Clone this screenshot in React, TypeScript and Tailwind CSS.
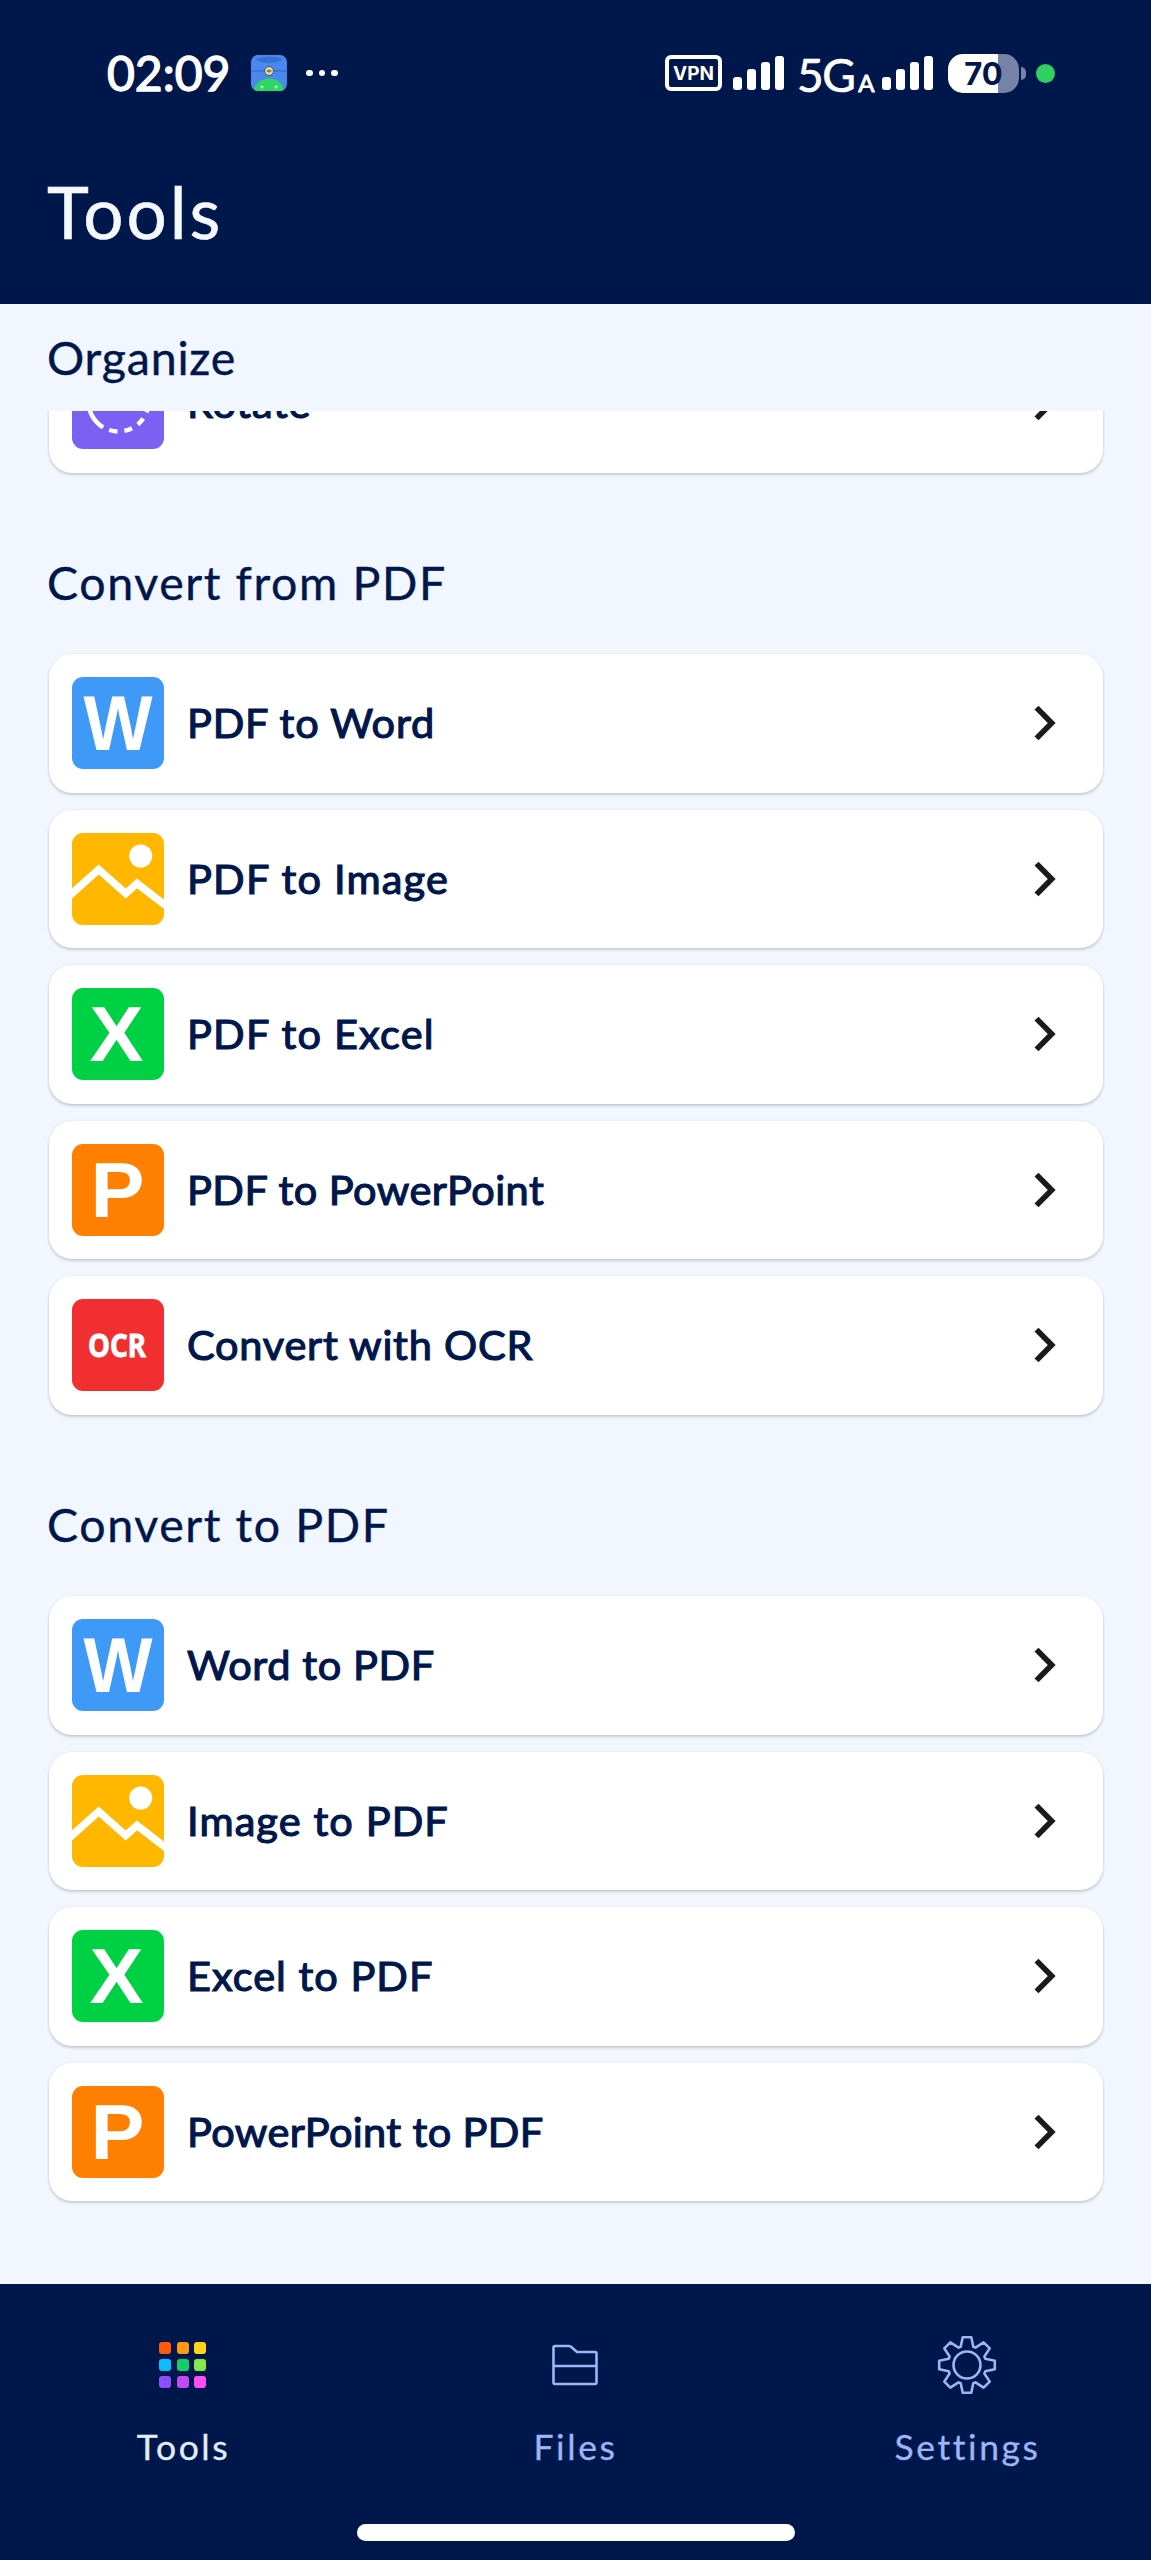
import type { ReactNode } from "react";

// ── Types ──────────────────────────────────────────────────────────
type IconKind = "word" | "image" | "excel" | "powerpoint" | "ocr" | "rotate";

type Tool = {
  label: string;
  icon: IconKind;
  tracking?: string;
};

const CONVERT_FROM: Tool[] = [
  { label: "PDF to Word", icon: "word" },
  { label: "PDF to Image", icon: "image", tracking: "tracking-[1.2px]" },
  { label: "PDF to Excel", icon: "excel", tracking: "tracking-[1.2px]" },
  { label: "PDF to PowerPoint", icon: "powerpoint", tracking: "tracking-[0.45px]" },
  { label: "Convert with OCR", icon: "ocr" },
];

const CONVERT_TO: Tool[] = [
  { label: "Word to PDF", icon: "word", tracking: "tracking-[0.6px]" },
  { label: "Image to PDF", icon: "image", tracking: "tracking-[1.1px]" },
  { label: "Excel to PDF", icon: "excel", tracking: "tracking-[1px]" },
  { label: "PowerPoint to PDF", icon: "powerpoint", tracking: "tracking-[0.35px]" },
];

const TILE_COLORS: Record<IconKind, string> = {
  word: "bg-[#3f99f7]",
  image: "bg-[#ffb700]",
  excel: "bg-[#00d044]",
  powerpoint: "bg-[#ff8000]",
  ocr: "bg-[#f22f30]",
  rotate: "bg-[#7b61f3]",
};

// Letter placement inside the 92px tile
const LETTERS: Partial<Record<IconKind, { text: string; x: number; y: number; width: number; size: number }>> = {
  word: { text: "W", x: 11.5, y: 73, width: 69, size: 78 },
  excel: { text: "X", x: 17.5, y: 73, width: 54, size: 78 },
  powerpoint: { text: "P", x: 18.5, y: 73, width: 54, size: 78 },
  ocr: { text: "OCR", x: 16, y: 57.5, width: 58, size: 31.5 },
};

const GRID_COLORS = [
  "bg-[#ff5a0a]", "bg-[#ff9a10]", "bg-[#ffd416]",
  "bg-[#0cbcff]", "bg-[#14cf66]", "bg-[#84e84c]",
  "bg-[#8c4dff]", "bg-[#c24af5]", "bg-[#ff4df5]",
];

function gearPath() {
  const tooth = [[-6.3, -18.3], [-4.3, -27.8], [4.3, -27.8], [6.3, -18.3]];
  const points: string[] = [];
  for (let i = 0; i < 8; i++) {
    const a = (i * Math.PI) / 4;
    for (const [x, y] of tooth) {
      const px = 30 + x * Math.cos(a) - y * Math.sin(a);
      const py = 30 + x * Math.sin(a) + y * Math.cos(a);
      points.push(`${px.toFixed(2)} ${py.toFixed(2)}`);
    }
  }
  return `M${points.join("L")}Z`;
}

function ToolIcon({ kind }: { kind: IconKind }) {
  const letter = LETTERS[kind];
  return (
    <div className={`h-[92px] w-[92px] shrink-0 overflow-hidden rounded-[11px] ${TILE_COLORS[kind]}`}>
      <svg viewBox="0 0 92 92" className="h-full w-full">
        {letter && (
          <text
            x={letter.x}
            y={letter.y}
            fontSize={letter.size}
            textLength={letter.width}
            lengthAdjust="spacingAndGlyphs"
            fill="#fff"
            stroke="#fff"
            strokeWidth={kind === "ocr" ? 0.8 : 0}
            className={kind === "ocr" ? "font-['Noto_Sans',sans-serif] font-bold" : "font-['Liberation_Sans',sans-serif] font-bold"}
          >
            {letter.text}
          </text>
        )}
        {kind === "image" && (
          <>
            <circle cx="68.7" cy="23" r="11.5" fill="#fff" />
            <path d="M-4 64 26.7 36.5 53.7 60.5 65 50.5 97 75" fill="none" stroke="#fff" strokeWidth="7.6" />
          </>
        )}
        {kind === "rotate" && (
          <path
            d="M16.5 44.5A30 30 0 0 0 76.5 44.5"
            fill="none"
            stroke="#fff"
            strokeWidth="4.4"
            strokeDasharray="31 6.5 8.5 7 8 7 8 7 8 7"
          />
        )}
      </svg>
    </div>
  );
}

function ToolCard({ label, icon, tracking = "tracking-[0.75px]" }: Tool) {
  return (
    <div className="flex h-[138.5px] items-center rounded-[23px] bg-white pl-[23px] pr-[42px] shadow-[0_2px_3px_rgba(0,0,0,0.17),0_0_3px_rgba(0,0,0,0.07)]">
      <ToolIcon kind={icon} />
      <span className={`-mt-0.5 ml-[23px] flex-1 text-[41.5px] leading-[56px] [-webkit-text-stroke:1.2px_#00174b] ${tracking}`}>
        {label}
      </span>
      <svg viewBox="0 0 32 40" className="h-10 w-8 shrink-0" fill="none" stroke="#1a1a1c" strokeWidth="5.6">
        <path d="M7.5 4.6 22.7 20 7.5 35.4" />
      </svg>
    </div>
  );
}

function SectionTitle({ tracking = "tracking-[1.6px]", children }: { tracking?: string; children: ReactNode }) {
  return (
    <h2 className={`-ml-0.5 flex h-[107px] items-center text-[46.5px] [-webkit-text-stroke:0.4px_#00174b] ${tracking}`}>
      {children}
    </h2>
  );
}

function Section({ title, tools }: { title: string; tools: Tool[] }) {
  return (
    <section className="mt-[57px]">
      <SectionTitle>{title}</SectionTitle>
      <div className="mt-[17.5px] flex flex-col gap-[17px]">
        {tools.map((tool) => (
          <ToolCard key={tool.label} {...tool} />
        ))}
      </div>
    </section>
  );
}

function SignalBars() {
  return (
    <div className="flex h-[34px] items-end gap-[5px]">
      <span className="h-[13px] w-[9px] rounded-[3px] bg-white" />
      <span className="h-[21px] w-[9px] rounded-[3px] bg-white" />
      <span className="h-[28px] w-[9px] rounded-[3px] bg-white" />
      <span className="h-[34px] w-[9px] rounded-[3px] bg-white" />
    </div>
  );
}

function StatusBar() {
  return (
    <div className="flex h-[146px] items-center pl-[107px] pr-[96px] text-white">
      <span className="w-[125px] text-[48px] leading-none [-webkit-text-stroke:1.4px_#fff]">02:09</span>
      <svg viewBox="0 0 36 36" className="ml-[19px] h-9 w-9">
        <defs>
          <clipPath id="app-tile">
            <rect width="36" height="36" rx="7" />
          </clipPath>
        </defs>
        <g clipPath="url(#app-tile)">
          <rect width="36" height="36" fill="#4a87ee" />
          <path d="M4 4Q18 -1 32 4Q26 8 18 8Q10 8 4 4Z" fill="#3671d8" />
          <path d="M0 16H36" stroke="#2f66c4" strokeWidth="1.2" />
          <path d="M3 36A15 12.5 0 0 1 33 36Z" fill="#2fd565" />
          <circle cx="11" cy="32" r="1.5" fill="#b8f5cb" />
          <circle cx="25" cy="32" r="1.5" fill="#b8f5cb" />
          <circle cx="18" cy="16" r="4.5" fill="#e0d99a" stroke="#47536b" strokeWidth="1" />
          <path d="M15.5 16H20.5M18 14.5V17.5" stroke="#47536b" strokeWidth="1" />
        </g>
      </svg>
      <div className="ml-[19px] flex gap-1.5">
        <span className="h-[6.5px] w-[6.5px] rounded-full bg-white" />
        <span className="h-[6.5px] w-[6.5px] rounded-full bg-white" />
        <span className="h-[6.5px] w-[6.5px] rounded-full bg-white" />
      </div>

      <div className="ml-auto flex items-center">
        <div className="flex h-9 w-[57px] items-center justify-center rounded-[6px] border-4 border-white font-['Inter',sans-serif] text-[19px] font-bold leading-none">
          VPN
        </div>
        <div className="ml-[11px]">
          <SignalBars />
        </div>
        <div className="ml-[13px] mt-1 flex w-[76px] items-baseline whitespace-nowrap">
          <span className="text-[46px] leading-none tracking-[-1.5px] [-webkit-text-stroke:0.7px_#fff]">5G</span>
          <span className="ml-1 text-[24px] leading-none [-webkit-text-stroke:0.9px_#fff]">A</span>
        </div>
        <div className="ml-[9px]">
          <SignalBars />
        </div>
        <div className="ml-[15px] flex h-[39px] w-[71px] items-center justify-center rounded-[15px] bg-[linear-gradient(90deg,#fff_50px,#7683a6_50px)] font-['Inter',sans-serif] text-[31px] font-bold leading-none text-[#00174b]">
          70
        </div>
        <span className="ml-0.5 h-[13px] w-[5px] rounded-r-full bg-[#7683a6]" />
        <span className="ml-[10px] h-[19px] w-[19px] rounded-full bg-[#30d05f]" />
      </div>
    </div>
  );
}

function NavItem({ label, active = false, children }: { label: string; active?: boolean; children: ReactNode }) {
  return (
    <button className={`flex w-[330px] flex-col items-center ${active ? "text-[#e3edff]" : "text-[#9db4f6]"}`}>
      <span className="flex h-[60px] items-center justify-center">{children}</span>
      <span className="mt-[31px] pl-0.5 text-[35.5px] leading-[42px] tracking-[2.6px] [-webkit-text-stroke:0.3px_currentColor]">
        {label}
      </span>
    </button>
  );
}

export default function App() {
  return (
    <div className="flex h-[2560px] w-[1151px] flex-col overflow-hidden bg-[#f2f6ff] font-['Lato',sans-serif] text-[#00174b]">
      <header className="h-[304px] bg-[#00174b]">
        <StatusBar />
        <h1 className="flex h-[132px] items-center pl-[47px] text-[71px] tracking-[3px] text-[#f5f8ff] [-webkit-text-stroke:0.6px_#f5f8ff]">
          Tools
        </h1>
      </header>

      <main className="flex-1 pl-[49px] pr-12">
        <div className="relative z-10 -mx-0.5 bg-[#f2f6ff] px-0.5">
          <SectionTitle tracking="tracking-[0.8px]">Organize</SectionTitle>
        </div>
        <div className="-mt-[77px]">
          <ToolCard label="Rotate" icon="rotate" />
        </div>
        <Section title="Convert from PDF" tools={CONVERT_FROM} />
        <Section title="Convert to PDF" tools={CONVERT_TO} />
      </main>

      <nav className="flex h-[276px] flex-col items-center bg-[#00174b] pt-[51px]">
        <div className="-ml-0.5 flex justify-center gap-[62px]">
          <NavItem label="Tools" active>
            <span className="grid grid-cols-3 gap-[5.3px]">
              {GRID_COLORS.map((color) => (
                <span key={color} className={`h-3 w-3 rounded-[3px] ${color}`} />
              ))}
            </span>
          </NavItem>
          <NavItem label="Files">
            <svg viewBox="0 0 60 60" className="h-[60px] w-[60px]" fill="none" stroke="currentColor" strokeWidth="2.6" strokeLinejoin="round">
              <path d="M8.5 12.5Q8.5 11 10 11H23.5Q25 11 26 11.8L32 17H50Q51.5 17 51.5 18.5V47.5Q51.5 49 50 49H10Q8.5 49 8.5 47.5Z" />
              <path d="M8.5 31H51.5" />
            </svg>
          </NavItem>
          <NavItem label="Settings">
            <svg viewBox="0 0 60 60" className="h-[60px] w-[60px]" fill="none" stroke="currentColor" strokeWidth="2.6" strokeLinejoin="round">
              <path d={gearPath()} />
              <circle cx="30" cy="30" r="13.5" />
            </svg>
          </NavItem>
        </div>
        <div className="mt-[56px] h-[17px] w-[438px] rounded-full bg-white" />
      </nav>
    </div>
  );
}
